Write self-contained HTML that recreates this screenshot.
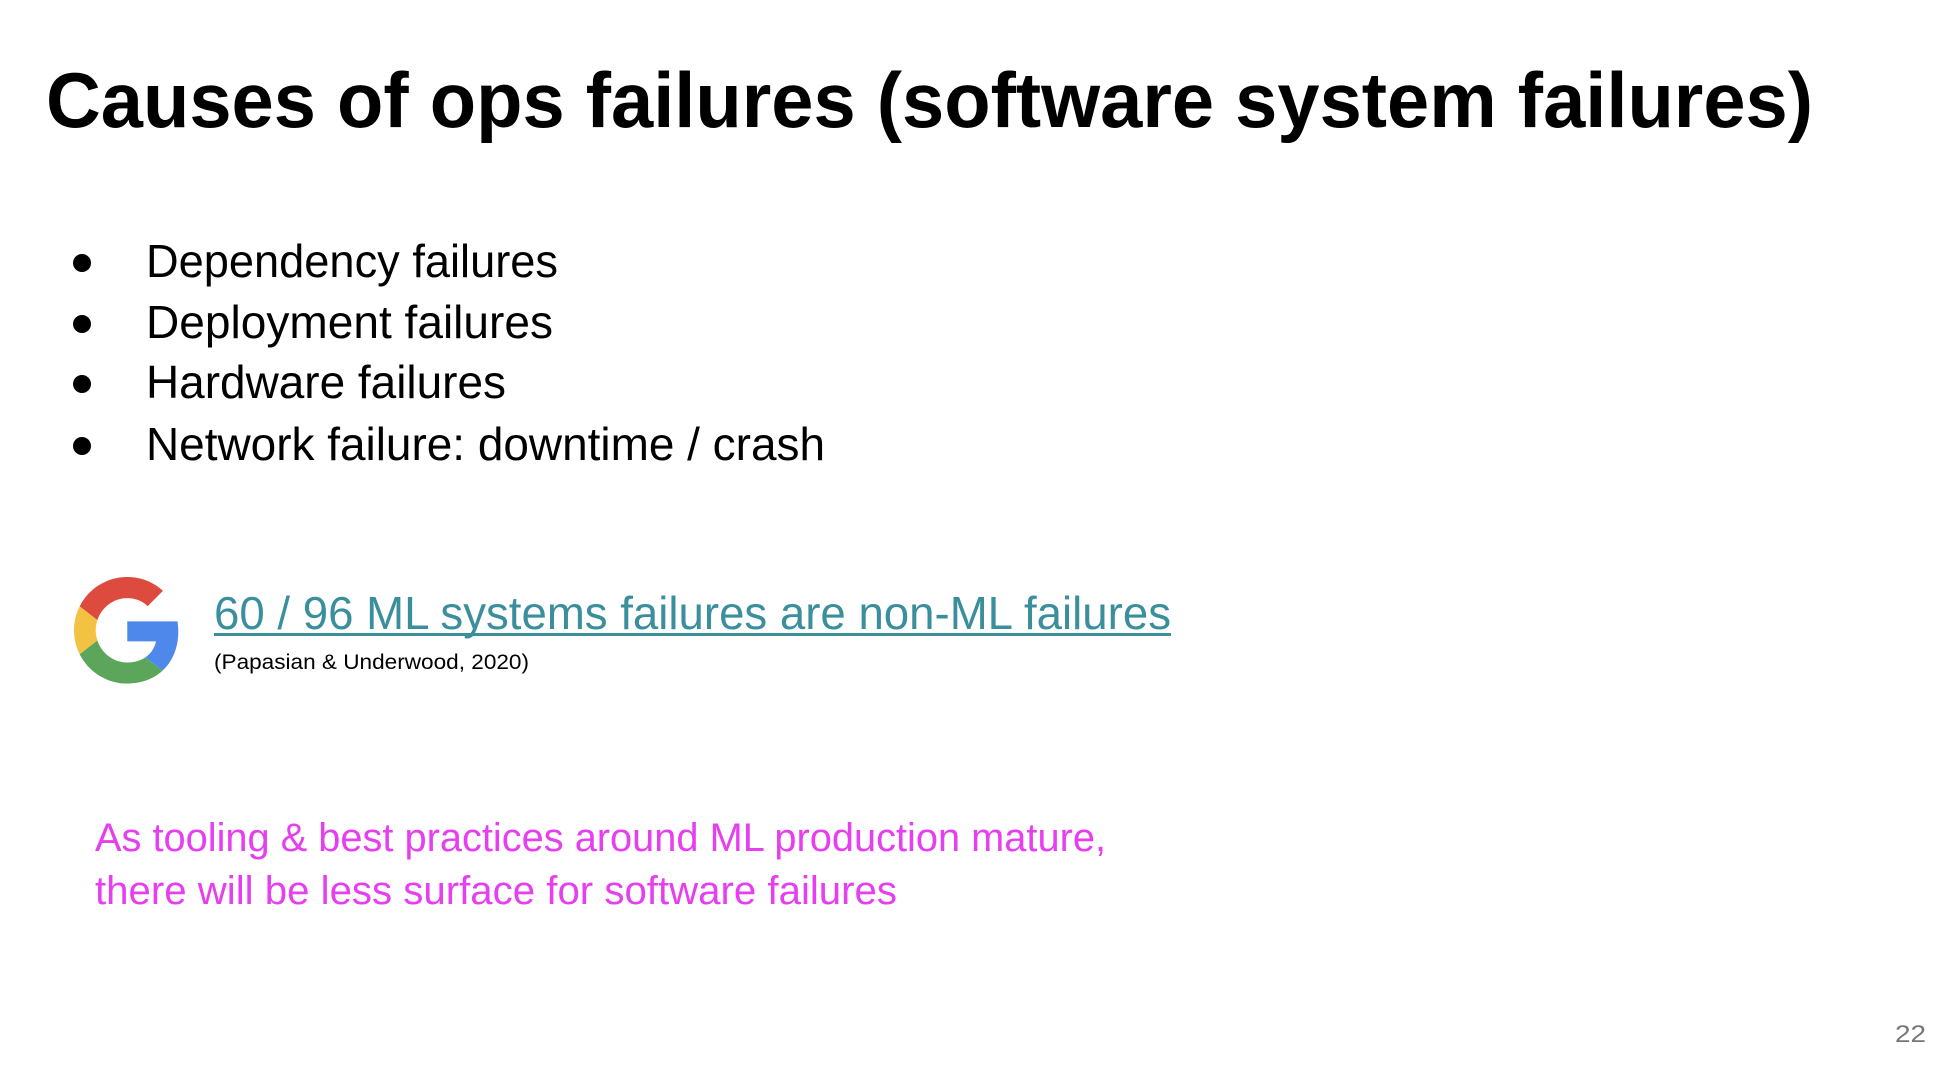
<!DOCTYPE html>
<html><head><meta charset="utf-8"><style>
html,body{margin:0;padding:0;background:#fff;width:1940px;height:1086px;overflow:hidden}
svg{display:block}
text{font-family:"Liberation Sans",sans-serif}
</style></head><body>
<svg width="1940" height="1086" viewBox="0 0 1940 1086" xmlns="http://www.w3.org/2000/svg">
<rect width="1940" height="1086" fill="#fff"/>
<text x="46" y="127" font-size="78" font-weight="bold" fill="#000" textLength="1767" lengthAdjust="spacingAndGlyphs">Causes of ops failures (software system failures)</text>
<g fill="#000">
<circle cx="82" cy="263" r="9"/><circle cx="82" cy="324" r="9"/><circle cx="82" cy="384" r="9"/><circle cx="82" cy="446" r="9"/>
</g>
<g font-size="46" fill="#000">
<text x="146" y="277" textLength="412" lengthAdjust="spacingAndGlyphs">Dependency failures</text>
<text x="146" y="338" textLength="407" lengthAdjust="spacingAndGlyphs">Deployment failures</text>
<text x="146" y="398" textLength="360" lengthAdjust="spacingAndGlyphs">Hardware failures</text>
<text x="146" y="460" textLength="679" lengthAdjust="spacingAndGlyphs">Network failure: downtime / crash</text>
</g>
<g transform="translate(74,577) scale(2.22)">
<path fill="#DD4B3E" d="M24 9.5c3.54 0 6.71 1.22 9.21 3.6l6.85-6.85C35.9 2.38 30.47 0 24 0 14.62 0 6.51 5.380 2.56 13.22l7.98 6.19C12.43 13.72 17.74 9.5 24 9.5z"/>
<path fill="#4E88EA" d="M46.98 24.55c0-1.57-.15-3.090-.38-4.55H24v9.02h12.94c-.58 2.96-2.26 5.48-4.78 7.18l7.73 6c4.51-4.18 7.09-10.36 7.09-17.65z"/>
<path fill="#F4C242" d="M10.53 28.59c-.48-1.45-.76-2.99-.76-4.59s.27-3.14.76-4.59l-7.98-6.190C.92 16.46 0 20.12 0 24c0 3.88.92 7.54 2.56 10.78l7.98-6.19z"/>
<path fill="#5BA65B" d="M24 48c6.48 0 11.93-2.13 15.89-5.81l-7.73-6c-2.15 1.45-4.92 2.3-8.16 2.3-6.26 0-11.57-4.22-13.47-9.91l-7.98 6.19C6.51 42.62 14.62 48 24 48z"/>
</g>
<text x="214" y="629" font-size="46" fill="#3B8E9C" textLength="957" lengthAdjust="spacingAndGlyphs">60 / 96 ML systems failures are non-ML failures</text>
<rect x="214" y="633" width="957" height="3" fill="#3B8E9C"/>
<text x="214" y="669" font-size="21" fill="#000" textLength="315" lengthAdjust="spacingAndGlyphs">(Papasian &amp; Underwood, 2020)</text>
<g font-size="40" fill="#E63EF0">
<text x="95" y="851" textLength="1011" lengthAdjust="spacingAndGlyphs">As tooling &amp; best practices around ML production mature,</text>
<text x="95" y="904" textLength="802" lengthAdjust="spacingAndGlyphs">there will be less surface for software failures</text>
</g>
<text x="1895" y="1042" font-size="24" fill="#777" textLength="31" lengthAdjust="spacingAndGlyphs">22</text>
</svg>
</body></html>
